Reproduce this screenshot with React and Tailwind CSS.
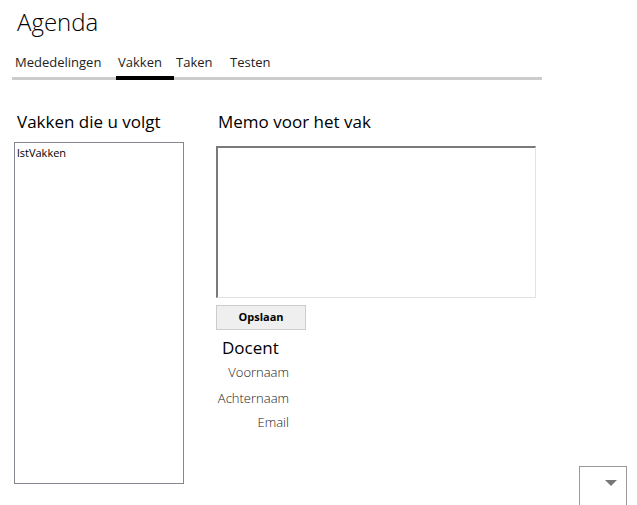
import React from "react";

const tabs = [
  { label: "Mededelingen", w: "w-[104px] pl-[3px]" },
  { label: "Vakken", w: "w-[58px] pl-[2px]" },
  { label: "Taken", w: "w-[54px] pl-[2px]" },
  { label: "Testen", w: "w-[60px] pl-[2px]" },
];

function TabBar() {
  return (
    <div className="ml-[12px] w-[530px] flex border-b-[3px] border-[#cccccc]">
      {tabs.map((t) => (
        <div
          key={t.label}
          className={
            t.label === "Vakken"
              ? `${t.w} -mb-[3px] border-b-[4px] border-black text-[13px] leading-[16px] pb-[6px] text-[#222] whitespace-nowrap`
              : `${t.w} text-[13px] leading-[16px] pb-[6px] text-[#222] whitespace-nowrap`
          }
        >
          {t.label}
        </div>
      ))}
    </div>
  );
}

export default function App() {
  return (
    <div
      className="w-[637px] h-[505px] overflow-hidden bg-white flex flex-col text-black"
      style={{ fontFamily: "'Open Sans', 'Noto Sans', sans-serif" }}
    >
      <h1 className="ml-[17px] mt-[6px] text-[24px] leading-[32px] font-light">Agenda</h1>
      <div className="mt-[16px]">
        <TabBar />
      </div>

      <div className="flex flex-1 mt-[31px]">
        <div className="ml-[14px] w-[170px] flex flex-col">
          <h2 className="ml-[3px] text-[17px] leading-[22px]">Vakken die u volgt</h2>
          <div className="mt-[9px] h-[342px] border border-[#828790] px-[2px] py-[3px] text-[11px] leading-[13px]">
            lstVakken
          </div>
        </div>

        <div className="ml-[32px] flex flex-col">
          <h2 className="ml-[2px] text-[17px] leading-[22px]">Memo voor het vak</h2>
          <textarea className="mt-[13px] w-[320px] h-[152px] resize-none border-t-2 border-l-2 border-r border-b border-t-[#7a7a7a] border-l-[#7a7a7a] border-r-[#e3e3e3] border-b-[#e3e3e3] outline-none" />
          <button className="mt-[7px] w-[90px] h-[25px] bg-[#efefef] border border-[#cccccc] text-[11px] font-bold">
            Opslaan
          </button>
          <div className="ml-[6px] mt-[7px] text-[17px] leading-[22px]">Docent</div>
          <div className="w-[73px] flex flex-col items-end text-[13px] font-light text-[#222]">
            <span className="mt-[4px] leading-[18px]">Voornaam</span>
            <span className="mt-[8px] leading-[18px]">Achternaam</span>
            <span className="mt-[6px] leading-[18px]">Email</span>
          </div>
        </div>

        <div className="flex-1 flex items-end justify-end pr-[10px]">
          <div className="w-[48px] h-[40px] -mb-[1px] border border-[#999] border-b-0 flex justify-end pt-[13px] pr-[9px]">
            <svg width="12" height="6" viewBox="0 0 12 6">
              <path d="M0 0 L12 0 L6 6 Z" fill="#777" />
            </svg>
          </div>
        </div>
      </div>
    </div>
  );
}
